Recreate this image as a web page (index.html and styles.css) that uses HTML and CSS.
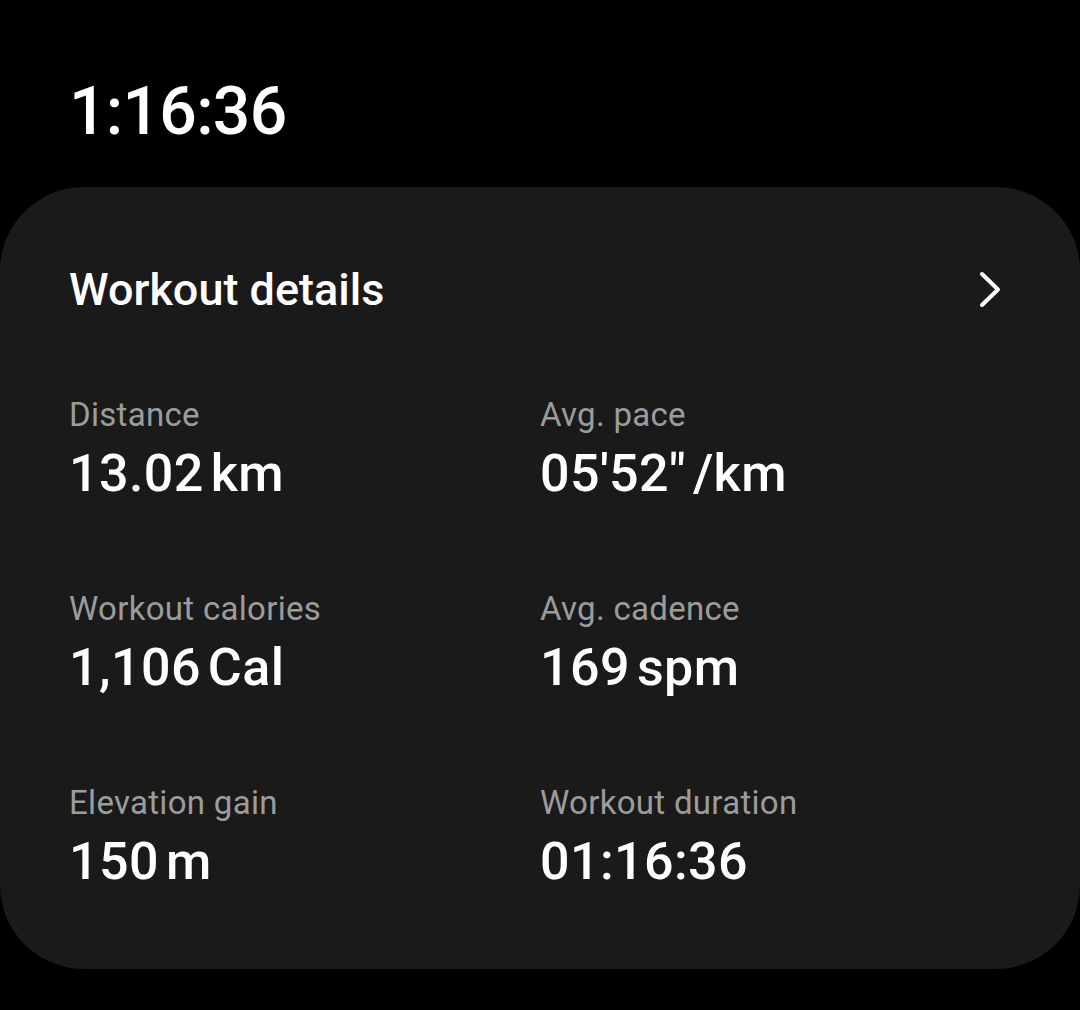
FILE: index.html
```html
<!DOCTYPE html>
<html>
<head>
<meta charset="utf-8">
<link rel="stylesheet" href="styles.css">
</head>
<body>
<div class="time">1:16:36</div>
<section class="card">
  <div class="card-header">
    <h2 class="title">Workout details</h2>
    <svg class="chevron" width="24" height="40" viewBox="0 0 24 40">
      <polyline points="4,4 20,19.5 4,35" fill="none" stroke="#fff" stroke-width="4" stroke-linecap="round" stroke-linejoin="round"/>
    </svg>
  </div>
  <div class="grid">
    <div class="stat">
      <div class="label">Distance</div>
      <div class="value"><span>13.02</span><span class="unit">km</span></div>
    </div>
    <div class="stat">
      <div class="label">Avg. pace</div>
      <div class="value"><span>05'52"</span><span class="unit">/km</span></div>
    </div>
    <div class="stat">
      <div class="label">Workout calories</div>
      <div class="value"><span>1,106</span><span class="unit">Cal</span></div>
    </div>
    <div class="stat">
      <div class="label">Avg. cadence</div>
      <div class="value"><span>169</span><span class="unit">spm</span></div>
    </div>
    <div class="stat">
      <div class="label">Elevation gain</div>
      <div class="value"><span>150</span><span class="unit">m</span></div>
    </div>
    <div class="stat">
      <div class="label">Workout duration</div>
      <div class="value"><span>01:16:36</span></div>
    </div>
  </div>
</section>
</body>
</html>
```

FILE: styles.css
```css
* { box-sizing: border-box; }
html, body {
  margin: 0;
  padding: 0;
  background: #000;
  color: #fff;
  font-family: Roboto, "Noto Sans", sans-serif;
}
body {
  width: 1080px;
  height: 1010px;
  overflow: hidden;
}
.time {
  padding: 79px 0 0 69px;
  font-size: 66px;
  line-height: 66px;
  font-weight: 500;
  letter-spacing: -0.7px;
  height: 187px;
}
.card {
  background: #1a1a1a;
  border-radius: 84px;
  height: 782px;
  padding: 80px 78px 0 69px;
}
.card-header {
  display: flex;
  align-items: center;
  justify-content: space-between;
  height: 45px;
}
.title {
  margin: 0;
  font-size: 45px;
  line-height: 45px;
  font-weight: 500;
}
.chevron {
  display: block;
}
.grid {
  display: grid;
  grid-template-columns: 471px 1fr;
  row-gap: 93px;
  margin-top: 87px;
}
.label {
  font-size: 33px;
  line-height: 32px;
  letter-spacing: 0.3px;
  color: #9c9c9c;
}
.value {
  margin-top: 17px;
  font-size: 52px;
  line-height: 52px;
  font-weight: 500;
  letter-spacing: 0.4px;
  display: flex;
  gap: 7px;
}
```
